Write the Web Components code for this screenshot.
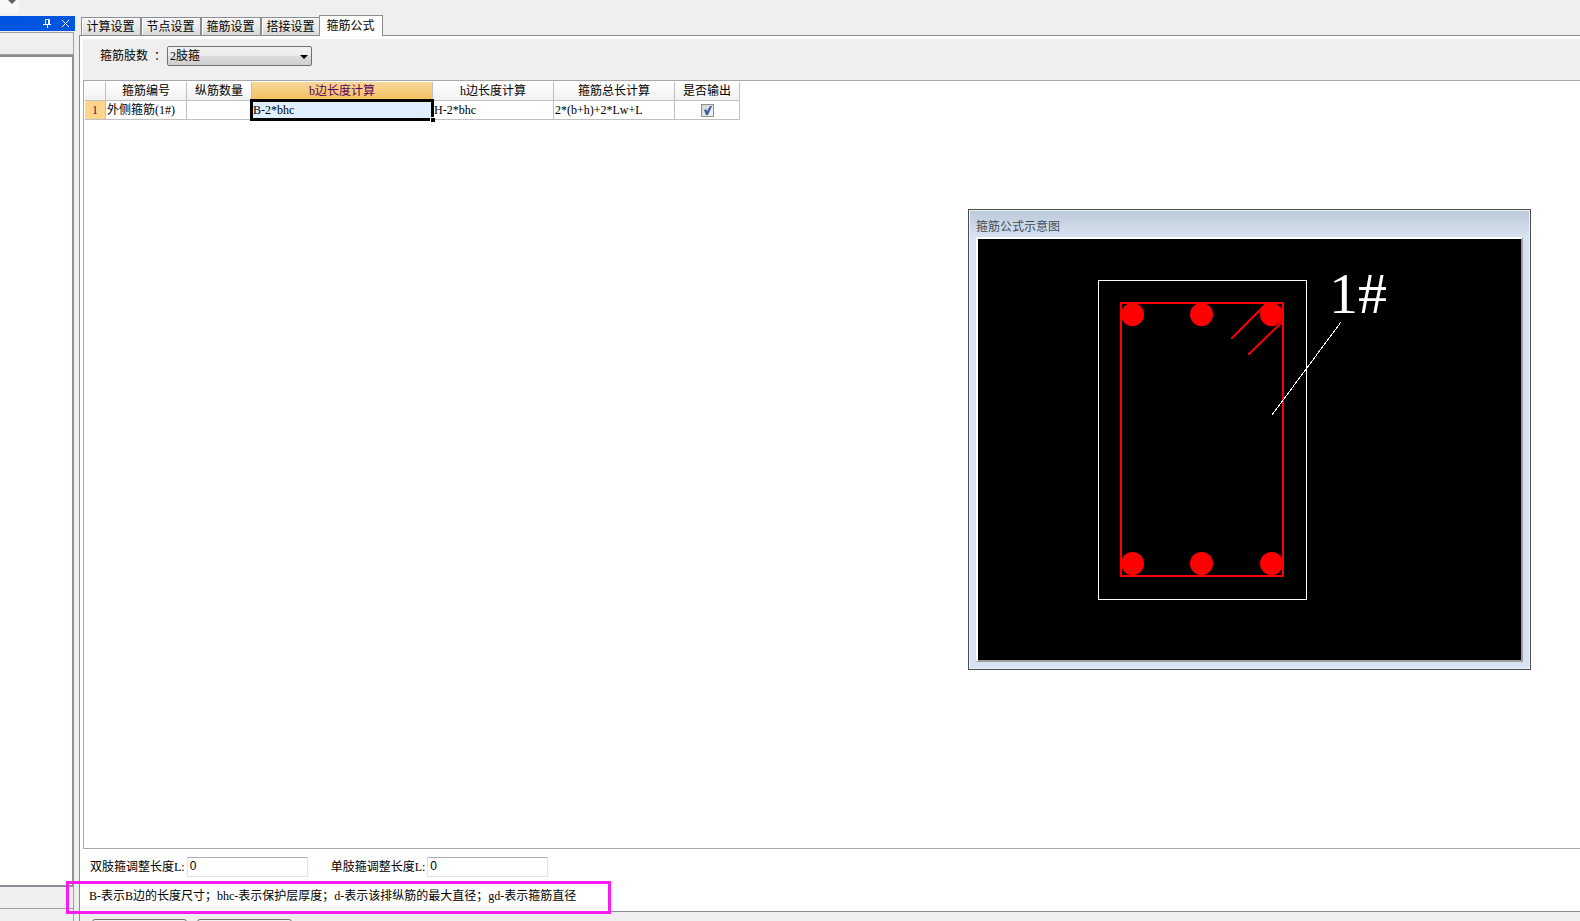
<!DOCTYPE html>
<html lang="zh-CN">
<head>
<meta charset="utf-8">
<title>箍筋公式</title>
<style>
html, body { height: 100%; margin: 0; }
body { overflow: hidden; background: #efefef; color: #000; font: 12px/18px "Liberation Serif", "Noto Sans CJK SC", serif; }
</style>
</head>
<body>
<app-shell>
  <tool-strip slot="top"></tool-strip>
  <dock-panel slot="side"></dock-panel>
  <tab-strip slot="main">
    <tab-button>计算设置</tab-button>
    <tab-button>节点设置</tab-button>
    <tab-button>箍筋设置</tab-button>
    <tab-button>搭接设置</tab-button>
    <tab-button active>箍筋公式</tab-button>
  </tab-strip>
  <formula-page slot="main"></formula-page>
  <button-bar slot="main"></button-bar>
</app-shell>
<diagram-window>箍筋公式示意图</diagram-window>
<script>
function define(name, html, setup) {
  const template = document.createElement('template');
  template.innerHTML = html;
  customElements.define(name, class extends HTMLElement {
    constructor() {
      super();
      this.attachShadow({ mode: 'open' }).append(template.content.cloneNode(true));
    }
    connectedCallback() { if (setup) setup(this); }
  });
}

define('app-shell', `
<style>
:host { display: flex; flex-direction: column; height: 100vh; }
.body { flex: 1; display: flex; min-height: 0; }
.side { flex: none; width: 75px; display: flex; }
.main { flex: 1; min-width: 0; display: flex; flex-direction: column; padding-left: 4px; }
</style>
<slot name="top"></slot>
<div class="body">
  <div class="side"><slot name="side"></slot></div>
  <main class="main"><slot name="main"></slot></main>
</div>`);

define('tool-strip', `
<style>
:host { display: block; flex: none; height: 15px; }
div { width: 19px; height: 13px; background: #f7f7f7; }
svg { display: block; margin-left: 8px; }
</style>
<div><svg width="8" height="4"><path d="M0 0h8L4 4z" fill="#606060"/></svg></div>`);

define('dock-panel', `
<style>
:host { flex: 1; display: flex; flex-direction: column; padding-top: 1px; min-width: 0; }
header { height: 15px; background: #0055e0; display: flex; justify-content: flex-end; align-items: center; gap: 9px; padding-right: 5px; }
button { border: 0; padding: 0; background: none; height: 15px; display: flex; align-items: center; }
.bar { height: 21px; margin: 1px 1px 0 0; border: 1px solid #a0a0a0; border-left: 0; }
.view { flex: 1; background: #fff; margin-right: 1px; border: 2px solid #898c95; border-left: 0; border-right-color: #8f8f96; }
.row { height: 21px; margin-right: 1px; border: 1px solid #a0a0a0; border-left: 0; border-top: 0; }
.end { height: 12px; margin-right: 1px; border-right: 1px solid #a0a0a0; }
</style>
<header>
  <button aria-label="固定"><svg width="9" height="11"><path d="M2.5 6V1.500H6.500V6M5.500 1V6M0 6.500H8M4.500 7V10" fill="none" stroke="#fff" stroke-width="1"/></svg></button>
  <button aria-label="关闭"><svg width="9" height="9"><path d="M1 1L8 8M8 1L1 8" stroke="#fff" stroke-width="1"/></svg></button>
</header>
<div class="bar"></div><div class="view"></div><div class="row"></div><div class="end"></div>`);

define('tab-strip', `
<style>
:host { display: flex; flex: none; height: 20px; align-items: flex-end; padding-left: 2px; }
</style><slot></slot>`);

define('tab-button', `
<style>
:host { display: block; }
button { box-sizing: border-box; width: 60px; height: 18px; padding: 0 1px 0 0; margin: 0; font: inherit; line-height: 18px; color: #000;
  border: 1px solid #898c95; border-bottom: 0; box-shadow: inset 1px 1px #fff;
  background: linear-gradient(#f3f3f3, #ebebeb 50%, #d8d8d8); display: block; }
:host([active]) { position: relative; margin: 0 0 -1px -2px; }
:host([active]) button { width: 64px; height: 21px; background: #fff; }
</style>
<button role="tab"><slot></slot></button>`, el => {
  el.shadowRoot.querySelector('button').setAttribute('aria-selected', el.hasAttribute('active'));
});

define('formula-page', `
<style>
:host { flex: 1; min-height: 0; display: flex; flex-direction: column; background: #fff;
  border: 1px solid #898c95; border-right: 0; padding: 3px 0 0 3px; }
.filter { flex: none; height: 41px; background: #efefef; display: flex; align-items: flex-start; padding-left: 17px; box-sizing: border-box; }
.filter label { display: flex; gap: 6px; width: 67px; line-height: 34px; }
.pick { position: relative; margin-top: 7px; }
select { display: block; appearance: none; box-sizing: border-box; width: 145px; height: 20px; padding: 0 2px; font: inherit; color: #000;
  border: 1px solid #707070; border-radius: 2px; background: linear-gradient(#f2f2f2, #ebebeb 50%, #ddd 50%, #cfcfcf); }
.pick svg { position: absolute; right: 4px; top: 9px; pointer-events: none; }
.grid { flex: 1; min-height: 0; border: 1px solid #a8a8a8; border-right: 0; padding: 1px; }
.extra { flex: none; display: flex; gap: 23px; padding: 8px 0 0 7px; height: 29px; box-sizing: border-box; }
.note { flex: none; position: relative; height: 33px; line-height: 36px; padding-left: 6px; white-space: nowrap; }
.mark { position: absolute; left: -17px; top: 3px; width: 539px; height: 27px; border: 3px solid #f81cf0; z-index: 2; }
</style>
<div class="filter"><label for="n"><span>箍筋肢数</span><span>：</span></label>
  <div class="pick"><select id="n"><option>2肢箍</option></select><svg width="8" height="4"><path d="M0 0h8L4 4z"/></svg></div>
</div>
<div class="grid"><formula-table></formula-table></div>
<div class="extra"><length-field value="0">双肢箍调整长度L:</length-field><length-field value="0">单肢箍调整长度L:</length-field></div>
<div class="note">B-表示B边的长度尺寸；bhc-表示保护层厚度；d-表示该排纵筋的最大直径；gd-表示箍筋直径<div class="mark"></div></div>`);

define('formula-table', `
<style>
:host { display: block; }
table { table-layout: fixed; width: 655px; border-collapse: separate; border-spacing: 0; }
th, td { box-sizing: border-box; height: 19px; padding: 0 1px; line-height: 18px; font-weight: normal; text-align: left; white-space: nowrap;
  border-right: 1px solid #c0c0c0; border-bottom: 1px solid #c0c0c0; }
thead th, thead td { text-align: center; background: linear-gradient(#fff, #f1f1f1); }
thead th.on { background: linear-gradient(#f9d79a, #f2c05e); color: #5c0060; }
tbody th { text-align: center; background: #ffd58d; color: #5c0060; }
td.on { position: relative; background: #dfefff; }
.box { position: absolute; inset: -2px -2px -2px -2px; border: 3px solid #000; }
.box::after { content: ""; position: absolute; right: -4px; bottom: -4px; width: 4px; height: 4px; background: #000; border: solid #fff; border-width: 1px 0 0 1px; }
td.tick { text-align: center; }
input { appearance: none; box-sizing: border-box; display: block; margin: 0 auto; width: 13px; height: 13px; border: 1px solid #8e8f8f;
  background: url("data:image/svg+xml,%3Csvg xmlns='http://www.w3.org/2000/svg' width='11' height='11'%3E%3Cpath d='M2 5l2-1 1 2 3-5h2L6 10H4z' fill='%23405c9c'/%3E%3C/svg%3E") center no-repeat, linear-gradient(135deg, #d0d3d8, #f5f5f5); }
</style>
<table>
<colgroup><col style="width:21px"><col style="width:81px"><col style="width:65px"><col style="width:181px"><col style="width:121px"><col style="width:121px"><col style="width:65px"></colgroup>
<thead><tr><td></td><th>箍筋编号</th><th>纵筋数量</th><th class="on">b边长度计算</th><th>h边长度计算</th><th>箍筋总长计算</th><th>是否输出</th></tr></thead>
<tbody><tr><th>1</th><td>外侧箍筋(1#)</td><td></td><td class="on">B-2*bhc<span class="box"></span></td><td>H-2*bhc</td><td>2*(b+h)+2*Lw+L</td><td class="tick"><input type="checkbox" checked aria-label="是否输出"></td></tr></tbody>
</table>`);

define('length-field', `
<style>
:host { display: block; }
label { display: flex; gap: 2px; line-height: 20px; white-space: nowrap; }
input { box-sizing: border-box; width: 121px; height: 20px; padding: 0 2px 2px; color: #000; font: 12px "Liberation Sans", sans-serif;
  border: 1px solid #e2e3ea; border-top-color: #abadb3; border-radius: 1px; background: #fff; }
</style>
<label><span><slot></slot></span><input type="text"></label>`, el => {
  el.shadowRoot.querySelector('input').value = el.getAttribute('value');
});

define('button-bar', `
<style>
:host { flex: none; display: flex; gap: 10px; height: 9px; padding: 0 0 0 12px; overflow: hidden; box-sizing: border-box; border-left: 1px solid #898c95; }
button { width: 95px; height: 23px; margin: 7px 0 0; border: 1px solid #707070; border-radius: 3px; background: #f2f2f2; }
</style>
<button aria-label="导入"></button><button aria-label="导出"></button>`);

define('diagram-window', `
<style>
:host { position: absolute; right: 49px; top: 209px; box-sizing: border-box; width: 563px; border: 1px solid #4c4c50; background: #d7e3f0; padding: 0 7px 7px; 
  box-shadow: inset 0 0 0 1px #eef3f8; }
header { height: 26px; margin: 1px -6px 0; padding-left: 6px; line-height: 29px; color: #444b55; font-family: "Noto Sans CJK SC", sans-serif;
  background: linear-gradient(#bccad9, #d7e3f0); }
svg { display: block; width: 543px; height: 421px; background: #000; border: 2px solid; border-color: #fff #a0a0a0 #a0a0a0 #fff; }
</style>
<header><slot></slot></header>
<svg viewBox="0 0 543 421" role="img" aria-label="箍筋示意图">
  <rect x="120.500" y="41.500" width="208" height="319" fill="none" stroke="#fff"/>
  <g fill="none" stroke="#f00" stroke-width="2" stroke-linecap="round"><rect x="143" y="64" width="162" height="273"/><path d="M288 65L254 99M305 82L271 115"/></g>
  <g fill="#f00"><circle cx="154.500" cy="75.500" r="11.500"/><circle cx="223.500" cy="75.500" r="11.500"/><circle cx="293.500" cy="75.500" r="11.500"/><circle cx="154.500" cy="324.500" r="11.500"/><circle cx="223.500" cy="324.500" r="11.500"/><circle cx="293.500" cy="324.500" r="11.500"/></g>
  <path d="M363 83L294 176" stroke="#fff" shape-rendering="crispEdges"/>
  <text x="351" y="74" fill="#fff" font-family="Liberation Serif, serif" font-size="58">1#</text>
</svg>`);
</script>
</body>
</html>
